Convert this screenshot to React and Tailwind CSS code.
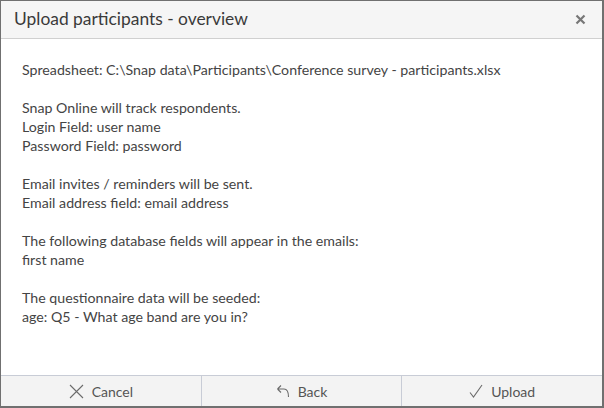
import React from 'react';

const lines = [
    ["Spreadsheet: C:\\Snap data\\Participants\\Conference survey - participants.xlsx"],
    ["Snap Online will track respondents.", "Login Field: user name", "Password Field: password"],
    ["Email invites / reminders will be sent.", "Email address field: email address"],
    ["The following database fields will appear in the emails:", "first name"],
    ["The questionnaire data will be seeded:", "age: Q5 - What age band are you in?"],
];

const CancelIcon = () => (
    <svg width="15" height="15" viewBox="0 0 15 15" className="text-[#6b6b6b]">
        <path d="M1 1 L14 14 M14 1 L1 14" stroke="currentColor" strokeWidth="1.1" fill="none" />
    </svg>
);

const BackIcon = () => (
    <svg width="14" height="14" viewBox="0 0 14 14" className="text-[#6b6b6b]">
        <path d="M1.5 5 L5 1.5 M1.5 5 L5 8.5 M1.5 5 H8 C11 5 12.5 7.5 12.5 13" stroke="currentColor" strokeWidth="1.1" fill="none" />
    </svg>
);

const CheckIcon = () => (
    <svg width="14" height="14" viewBox="0 0 14 14" className="text-[#6b6b6b]">
        <path d="M1 8.5 L4.5 13 L13 1" stroke="currentColor" strokeWidth="1.1" fill="none" />
    </svg>
);

const FooterButton = ({ icon, label, last }) => (
    <button className={`flex-1 flex items-center justify-center gap-2 text-[14px] text-[#555] bg-[#f3f3f3] ${last ? '' : 'border-r border-[#c8ccd6]'}`}>
        {icon}
        <span>{label}</span>
    </button>
);

export default function App() {
    return (
        <div className="w-[604px] h-[408px] flex flex-col bg-white border-t border-l border-r-2 border-b-2 border-[#707070] font-['Lato','Noto_Sans',sans-serif] text-[#444]">
            {/* header */}
            <div className="h-[38px] flex items-center justify-between pl-[13px] pr-[16px] bg-[#f5f5f5] border-b border-[#d0d0d0]">
                <span className="text-[17.4px] text-[#3a3a3a]">Upload participants - overview</span>
                <svg width="11" height="11" viewBox="0 0 11 11" className="text-[#777]">
                    <path d="M1.5 1.5 L9.5 9.5 M9.5 1.5 L1.5 9.5" stroke="currentColor" strokeWidth="2.2" fill="none" />
                </svg>
            </div>

            {/* body */}
            <div className="flex-1 pt-[21px] pl-[21px] flex flex-col gap-[19px] text-[14.2px] leading-[19px]">
                {lines.map((group, i) => (
                    <div key={i}>
                        {group.map((l) => (
                            <div key={l}>{l}</div>
                        ))}
                    </div>
                ))}
            </div>

            {/* footer */}
            <div className="h-[31px] flex border-t border-[#c8ccd6]">
                <FooterButton icon={<CancelIcon />} label="Cancel" />
                <FooterButton icon={<BackIcon />} label="Back" />
                <FooterButton icon={<CheckIcon />} label="Upload" last />
            </div>
        </div>
    );
}
